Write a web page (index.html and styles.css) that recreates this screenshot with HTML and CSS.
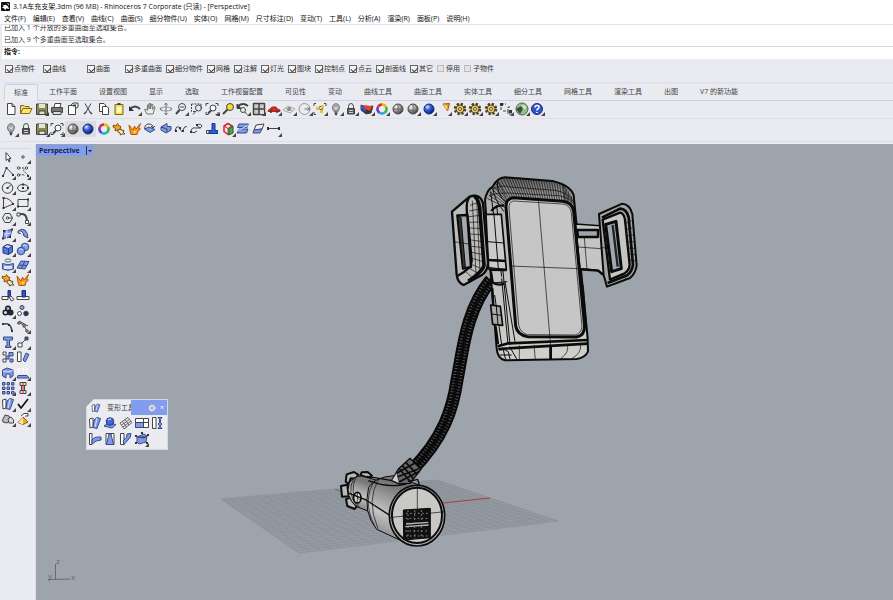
FILE: index.html
```
<!DOCTYPE html>
<html lang="zh-CN">
<head>
    <meta charset="UTF-8">
    <title>3.1A车充支架.3dm (96 MB) - Rhinoceros 7 Corporate</title>
    <link rel="stylesheet" href="styles.css">
</head>
<body>
    <header class="titlebar">
        <svg class="logo" viewBox="0 0 10 10"><rect width="10" height="10" rx="1" fill="#111"/><path d="M1 2L3 4L5 3L8 5L9 8L6 7L5 9L3 7L1 6L3 5Z" fill="#fff"/><path d="M6 1L9 2V4Z" fill="#ccc"/></svg>
        <span>3.1A车充支架.3dm (96 MB) - Rhinoceros 7 Corporate (只读) - [Perspective]</span>
    </header>
    <nav class="menu">
        <button>文件(F)</button>
        <button>编辑(E)</button>
        <button>查看(V)</button>
        <button>曲线(C)</button>
        <button>曲面(S)</button>
        <button>细分物件(U)</button>
        <button>实体(O)</button>
        <button>网格(M)</button>
        <button>尺寸标注(D)</button>
        <button>变动(T)</button>
        <button>工具(L)</button>
        <button>分析(A)</button>
        <button>渲染(R)</button>
        <button>面板(P)</button>
        <button>说明(H)</button>
    </nav>
    <div class="history">
        <p>已加入 1 个开放的多重曲面至选取集合。</p>
        <p>已加入 9 个多重曲面至选取集合。</p>
    </div>
    <div class="prompt">
        <label for="cmd">指令:</label>
        <input type="text" id="cmd" name="cmd">
    </div>
    <div class="filters">
        <label class="w1"><input type="checkbox" checked>点物件</label>
        <label class="w2"><input type="checkbox" checked>曲线</label>
        <label class="w1"><input type="checkbox" checked>曲面</label>
        <label><input type="checkbox" checked>多重曲面</label>
        <label><input type="checkbox" checked>细分物件</label>
        <label><input type="checkbox" checked>网格</label>
        <label><input type="checkbox" checked>注解</label>
        <label><input type="checkbox" checked>灯光</label>
        <label><input type="checkbox" checked>图块</label>
        <label><input type="checkbox" checked>控制点</label>
        <label><input type="checkbox" checked>点云</label>
        <label><input type="checkbox" checked>剖面线</label>
        <label><input type="checkbox" checked>其它</label>
        <label><input class="off" type="checkbox">停用</label>
        <label><input class="off" type="checkbox">子物件</label>
    </div>
    <div class="tabs">
        <button class="on">标准</button>
        <button>工作平面</button>
        <button>设置视图</button>
        <button>显示</button>
        <button>选取</button>
        <button>工作视窗配置</button>
        <button>可见性</button>
        <button>变动</button>
        <button>曲线工具</button>
        <button>曲面工具</button>
        <button>实体工具</button>
        <button>细分工具</button>
        <button>网格工具</button>
        <button>渲染工具</button>
        <button>出图</button>
        <button>V7 的新功能</button>
    </div>
    <div class="bar"><div class="tools std" data-icons="new open save. print props cut copy paste undo. pan rotate zoom. zoomwin zoomext. zoomsel undoview. views. car. cplane. circlec. points. bulb. lock. layers. wheel. sphere shaded. blue. cone. gear. gear. gear. dim. globe. help."></div></div>
    <div class="bar last"><div class="tools sub" data-icons="bulb. lock save. zoomext. shaded* blue* wheel join explode srfloop srfback wave loop tpiece boxred. planes offset line."></div></div>

    <main>
        <aside><div class="tools side" data-icons="arrow point. polyline. ctrl. circle. ellipse. arc. rect. polygon. fillet. patch. sheet. box. union. cylinder. plane. join explode trim split group. ungroup curve curvepts. text. move. array mirror boxedit. lift. grid. flow. bend. check. cage. pyramid."></div></aside>
        <section class="viewport">
            <svg class="scene" viewBox="36 144 857 456" preserveAspectRatio="xMinYMin slice">
                <defs>
                    <linearGradient id="metal" x1="0" y1="0" x2="-.3" y2="1">
                        <stop offset="0" stop-color="#777"/><stop offset=".4" stop-color="#c4c4c4"/><stop offset="1" stop-color="#555"/>
                    </linearGradient>
                    <linearGradient id="shell" x1="0" y1="0" x2="0" y2="1">
                        <stop offset="0" stop-color="#606060"/><stop offset=".14" stop-color="#b4b4b4"/><stop offset="1" stop-color="#d0d0cd"/>
                    </linearGradient>
                </defs>
                <path d="M221 499L299 553L558 521L437 480Z" fill="#969ca4"/>
                <g id="floor" stroke="#858b93" stroke-width=".5"></g>
                <path d="M335 489L342 492" stroke="#2f9b3c"/>
                <path d="M443 503L490 498" stroke="#b3393d"/>

                <!-- hose -->
                <g fill="none">
                    <path d="M491 280C466 310 463 350 457 380C453 408 444 438 411 471" stroke="#080808" stroke-width="13"/>
                    <path d="M490 282C466 310 463 350 457 380C453 408 444 438 412 470" stroke="#555" stroke-width="9" stroke-dasharray="1 2"/>
                    <path d="M490 282C466 310 463 350 457 380C453 408 444 438 412 470" stroke="#090909" stroke-width="4" stroke-dasharray="2 1"/>
                </g>

                <!-- charger -->
                <g transform="translate(320 440) scale(.3333)" stroke="#0b0b0b" stroke-width="3" stroke-linejoin="round">
                    <g fill="#b9b9b7" stroke-width="6">
                        <path d="M77 125L80 103L102 96L114 104L109 116L92 115L86 132Z"/>
                        <path d="M63 138L82 134L86 169L66 170Z"/>
                        <path d="M78 178L92 172L110 199L104 207L82 198Z"/>
                        <path d="M121 105L125 97L143 96L156 107L145 114Z"/>
                    </g>
                    <path d="M88 128Q102 107 125 108L175 122L149 215L108 199Q75 170 88 128Z" fill="url(#metal)"/>
                    <path d="M102 115Q78 155 112 200M108 112Q86 155 118 202" fill="none" stroke-width="2"/>
                    <ellipse cx="112" cy="173" rx="11" ry="16" fill="#ddd" stroke-width="5"/>
                    <path d="M106 164L118 180M112 158V188" stroke-width="2"/>
                    <path d="M146 142Q164 111 222 107L302 137L278 318L170 268Q128 218 146 142Z" fill="url(#metal)"/>
                    <path d="M165 121Q125 180 164 258M177 116Q137 180 174 266" fill="none" stroke-width="2"/>
                    <path d="M140 109L235 125M84 159L138 180L220 233M145 122Q205 145 258 132" fill="none" stroke-width="4"/>
                    <ellipse cx="291" cy="227" rx="83" ry="91" fill="#b5b5b2" stroke-width="5"/>
                    <ellipse cx="291" cy="226" rx="75" ry="83" fill="#c9c8c5" stroke-width="6"/>
                    <path d="M292 137V220M208 233L374 215" stroke-width="2"/>
                    <path d="M250 210L331 205V293L251 300Z" fill="#111"/>
                    <path d="M258 252L325 247M256 260L326 255" stroke="#b8b8b5" stroke-width="4"/>
                    <path d="M258 220H325M257 235H325M256 273H325M258 288H325M264 211V296M284 211V296M304 211V296" fill="none" stroke="#888" stroke-dasharray="5 7"/>
                    <path d="M215 122L235 87L270 55L303 88L270 130L238 132Z" fill="#666" stroke-width="4"/>
                    <path d="M238 86L270 124M247 77L281 117M258 68L292 104M231 99L285 69M232 111L297 86M237 126L299 94" stroke-width="5"/>
                    <path d="M216 120L230 97L238 129" fill="#ccc" stroke-width="2"/>
                    <path d="M265 125L293 118L299 137" fill="none" stroke-width="4"/>
                </g>

                <!-- phone holder -->
                <g transform="translate(430 165) scale(.3333)" stroke="#0b0b0b" stroke-width="3" stroke-linejoin="round">
                    <path d="M165 105Q170 75 188 65Q202 38 225 37L367 48Q420 60 431 90L438 160L473 520L474 560Q465 579 440 582L225 586Q202 580 200 550L187 390Z" fill="url(#shell)" stroke-width="6"/>
                    <path id="ribs" fill="none" stroke-width="2"/>
                    <path d="M188 65Q190 100 222 140M202 48Q200 90 228 112M182 80L215 335M200 120L240 540M178 355L232 350M194 390L215 540M215 340L234 538M225 350L255 530" fill="none" stroke-width="3"/>
                    <path d="M184 138Q196 120 222 121" fill="none" stroke-width="7"/>
                    <path d="M168 148L214 148L229 314L176 312Z" fill="#cbcbc9" stroke-width="5"/>
                    <path d="M192 150L205 310M172 230L222 234M172 283L226 287M174 307L228 314" fill="none"/>
                    <path d="M174 285L228 288M178 314L230 315" stroke-width="8"/>
                    <path d="M182 420L211 424L218 481L188 478Z" fill="#aaa" stroke-width="5"/>
                    <path d="M185 447L213 451M199 424L204 478" fill="none"/>
                    <path d="M183 320L188 352Q200 363 222 357M187 370L190 420M197 484L204 537" fill="none" stroke-width="7"/>

                    <path d="M436 177L522 183L532 324L514 326L503 316L450 311Z" fill="#c5c5c3" stroke-width="5"/>
                    <path d="M442 195H504V216H444Z" fill="#9fa6ad" stroke-width="7"/>
                    <path d="M443 246L527 252M463 218L471 312" fill="none" stroke-width="2"/>
                    <path d="M450 313L505 317L518 328L535 326" fill="none" stroke-width="7"/>

                    <path d="M66 140L119 95Q150 84 159 116L174 293Q173 318 157 329L101 360Q83 354 80 329Z" fill="#bcbcba" stroke-width="7"/>
                    <path d="M119 96Q104 112 114 165L125 286Q127 310 82 333" fill="none" stroke-width="7"/>
                    <path d="M132 94Q144 98 149 127L162 300Q160 318 115 349" fill="none" stroke-width="11"/>
                    <path d="M82 151L112 150L123 306L99 311Z" fill="#a2a8ae" stroke-width="7"/>
                    <path d="M83 152L93 157L106 305L99 311Z" fill="#333"/>
                    <path d="M120 121L146 112M118 138L149 132M117 155L151 151M118 172L153 171M120 189L155 191M122 207L157 210M123 225L158 230M125 244L160 248M126 262L160 269M126 280L162 291M122 297L157 312M115 309L145 325M105 318L127 338M72 230L122 238M127 107L138 325M140 105L150 320" fill="none" stroke-width="2"/>

                    <path d="M507 147L577 116Q600 118 607 147L620 301Q617 325 600 339L531 365L521 330Z" fill="#a6a6a4" stroke-width="6"/>
                    <path d="M518 164L570 143Q582 145 585 164L599 299Q598 316 584 325L540 344Z" fill="#c5c5c3" stroke-width="7"/>
                    <path d="M527 178L558 169L574 311L545 320Z" fill="#a0a7ae" stroke-width="9"/>
                    <path d="M548 180L563 305" stroke="#222" stroke-width="7"/>
                    <path d="M516 158L570 131Q590 132 596 157L609 299Q607 319 592 331L533 354" fill="none" stroke-width="8"/>
                    <path d="M586 176L605 167M588 194L608 188M590 213L610 210M592 231L612 230M594 249L614 250M596 267L616 269M598 285L618 288M575 325L590 344M511 247L534 250" stroke-width="2"/>

                    <path d="M250 98L398 109Q427 113 431 139L464 485Q463 512 440 516L292 515Q262 509 257 483L228 126Q228 100 250 98Z" fill="#c6c6c7" stroke-width="9"/>
                    <path d="M250 108L397 117Q421 119 424 144L456 486Q453 506 435 510L292 509Q270 502 266 480L237 130Q236 111 250 108Z" fill="none" stroke-width="2"/>
                    <path d="M325 100L365 580M237 303L446 311" stroke-width="2"/>
                    <path d="M203 544L235 535L474 525M205 552L474 536" fill="none" stroke-width="8"/>
                    <path d="M268 541V583M312 540L316 583M360 538V582M411 536Q420 562 392 581M451 535Q457 565 425 581M460 360L473 520" fill="none" stroke-width="2"/>
                    <path d="M362 540V582" stroke-width="8"/>
                    <path d="M207 556Q223 549 235 560L240 582M218 548L227 583M239 545L260 582M209 570H245" fill="none" stroke-width="3"/>
                </g>

                <g class="axes">
                    <path d="M55.5 564V580M48 579.500L70 579"/>
                    <text x="56" y="564">z</text><text x="48" y="579">y</text><text x="71" y="580">x</text>
                </g>
            </svg>
            <button class="vname"><span>Perspective</span><i></i></button>
            <div class="palette">
                <div class="phead">
                    <svg class="ic small" viewBox="0 0 14 14"><use href="#bend"/></svg>
                    <span>变形工具</span>
                    <div class="pbtn">
                        <button aria-label="选项"><svg viewBox="0 0 8 8"><circle cx="4" cy="4" r="2.500" fill="none" stroke="#eee9d0" stroke-width="2" stroke-dasharray="1.300 .7"/><circle cx="4" cy="4" r="2" fill="none" stroke="#eee9d0"/></svg></button>
                        <button aria-label="关闭">×</button>
                    </div>
                </div>
                <div class="tools deform" data-icons="bend ball mesh stretch twist taper cone2 flow2 cage2."></div>
            </div>
        </section>
    </main>
    <script src="main.js"></script>
</body>
</html>
```
FILE: styles.css
```
*{
    box-sizing: border-box;
}
body{
    margin: 0;
    height: 100vh;
    display: flex;
    flex-direction: column;
    overflow: hidden;
    background: #e9ebf0;
    color: #333;
    font-family: "Open Sans", "Noto Sans CJK SC", sans-serif;
    font-size: 7px;
    line-height: 12px;
}
button{
    border: 0;
    margin: 0;
    padding: 0;
    background: none;
    color: inherit;
    font: inherit;
    white-space: nowrap;
}
.titlebar{
    display: flex;
    align-items: center;
    gap: 3px;
    height: 13px;
    padding-left: 1px;
    background: #fff;
    color: #111;
    white-space: nowrap;
}
.logo{
    width: 9px;
    height: 9px;
}
.menu{
    display: flex;
    gap: 7px;
    height: 11px;
    padding-left: 4px;
    background: #fff;
    line-height: 10px;
    color: #111;
}
.history{
    display: flex;
    flex-direction: column;
    justify-content: flex-end;
    height: 23px;
    margin-left: 2px;
    padding-left: 2px;
    overflow: hidden;
    background: #fff;
    border-top: 1px solid #dfe2e8;
    border-bottom: 1px solid #d3dbe5;
}
.history p{
    margin: 0;
    flex: none;
}
.prompt{
    display: flex;
    height: 12px;
    margin-left: 2px;
    padding-left: 2px;
    background: #fff;
    line-height: 10px;
    font-weight: bold;
    color: #111;
}
.prompt input{
    flex: 1;
    border: 0;
    padding: 0 2px;
    outline: 0;
    background: none;
    font: inherit;
}
.filters{
    display: flex;
    align-items: center;
    gap: 4px;
    height: 24px;
    margin: 0 0 0 2px;
    padding-left: 3px;
    padding-bottom: 4px;
    border-bottom: 1px solid #dfe2ec;
}
.filters label{
    display: flex;
    align-items: center;
    gap: 1px;
    white-space: nowrap;
}
.filters .w1{
    width: 34px;
}
.filters .w2{
    width: 40px;
}
.filters input{
    appearance: none;
    width: 8px;
    height: 8px;
    margin: 0;
    border: 1px solid #666;
    background: #f5f5f5;
}
.filters input:checked::before{
    content: "";
    display: block;
    width: 5px;
    height: 3px;
    margin: 1px 0 0 1px;
    border: solid #444;
    border-width: 0 0 1px 1px;
    transform: rotate(-45deg);
}
.filters input.off{
    width: 7px;
    height: 7px;
    margin-right: 1px;
    border-color: #bbb;
    background: #e4e4e6;
}
.tabs{
    display: flex;
    height: 18px;
    margin-left: 4px;
    border-top: 1px solid #e2e4ec;
    border-bottom: 1px solid #ccd0e0;
}
.tabs button{
    padding: 0 11px;
    color: #444;
}
.tabs .on{
    margin-bottom: -1px;
    padding: 0 9px;
    background: #eceef3;
    border-right: 1px solid #ccd3e0;
    border-top: 1px solid #ccd3e0;
    border-left: 1px solid #ccd3e0;
    border-radius: 4px 0 0 0;
}
.bar{
    height: 18px;
    margin-left: 2px;
    padding-left: 1px;
    border-bottom: 1px solid #dcdfe6;
}
.last{
    height: 23px;
    padding-top: 2px;
    margin-bottom: 2px;
}
.tools{
    display: grid;
}
.tools button{
    position: relative;
    display: flex;
    align-items: center;
    justify-content: center;
    min-width: 0;
}
.tools .more::after{
    content: "";
    position: absolute;
    right: 0;
    bottom: 0;
    border: solid transparent;
    border-width: 2px;
    border-right-color: #444;
    border-bottom-color: #444;
}
.tools .lit{
    background: #dadce0;
}
.ic{
    width: 14px;
    height: 14px;
    flex: none;
    fill: none;
    stroke: #444;
    stroke-linejoin: round;
}
.small{
    width: 10px;
    height: 10px;
}
.defs{
    position: absolute;
    width: 0;
    height: 0;
}
.std{
    width: 542px;
    height: 15px;
    grid-template-columns: repeat(35, 1fr);
}
.sub{
    width: 279px;
    height: 16px;
    grid-template-columns: repeat(18, 1fr);
}
main{
    flex: 1;
    display: flex;
    min-height: 0;
}
aside{
    width: 36px;
    flex: none;
    padding: 4px 4px 0 0;
    border-right: 1px solid #d9dce2;
}
.side{
    height: 279px;
    grid-template-columns: 1fr 1fr;
    grid-auto-rows: 1fr;
    border-top: 1px solid #d0d8e4;
}
.viewport{
    position: relative;
    flex: 1;
    min-width: 0;
    background: #9da4ab;
}
.scene{
    display: block;
    width: 100%;
    height: 100%;
}
.axes path{
    fill: none;
    stroke: #666b70;
}
.axes text{
    fill: #666b70;
    font-size: 8px;
}
.vname{
    position: absolute;
    left: 0;
    top: 1px;
    display: flex;
    align-items: center;
    height: 11px;
    padding: 0 1px 0 3px;
    background: #829cee;
    color: #1a2140;
    font-size: 7px;
    font-weight: bold;
    line-height: 11px;
}
.vname i{
    display: flex;
    align-items: center;
    height: 9px;
    margin-left: 6px;
    padding-left: 1px;
    border-left: 1px solid #333;
}
.vname i::after{
    content: "";
    border: 2px solid transparent;
    border-top-color: #222;
    margin-top: 2px;
}
.palette{
    position: absolute;
    left: 50px;
    top: 255px;
    width: 82px;
    height: 51px;
    background: #eaecf1;
    border: 1px solid #d5d9e2;
    clip-path: polygon(8px 0, 100% 0, 100% 100%, 0 100%, 0 8px);
}
.phead{
    display: flex;
    align-items: center;
    height: 15px;
    padding-left: 4px;
    gap: 6px;
}
.phead span{
    flex: 1;
    min-width: 0;
    white-space: nowrap;
}
.pbtn{
    position: relative;
    flex: none;
    display: flex;
    align-items: center;
    justify-content: flex-end;
    gap: 4px;
    width: 36px;
    height: 15px;
    margin-left: -6px;
    padding-right: 3px;
    background: #829cee;
    color: #fff;
}
.pbtn button{
    display: flex;
}
.pbtn svg{
    width: 8px;
    height: 8px;
}
.deform{
    width: 78px;
    height: 32px;
    grid-template-columns: repeat(5, 1fr);
    grid-auto-rows: 1fr;
}
```
FILE: main.js
```
// toolbar icons, drawn on a 14 x 14 grid
var blue = 'fill="#7d9bea" stroke="#3a4a86"';
var dark = 'fill="#333" stroke="none"';
var icons = {
    "new": '<path d="M3.500 1.500H8L11 4.500V12.500H3.500Z" fill="#fff"/><path d="M8 1.500V4.500H11"/>',
    open: '<path d="M1.500 11.500V3.500H5L6 4.500H10V6.500" fill="#f5d76a" stroke="#8a6a10"/><path d="M1.500 11.500L4 6.500H13L10.500 11.500Z" fill="#ffe27a" stroke="#8a6a10"/>',
    save: '<path d="M1.500 2H12.500V12.500H1.500Z" fill="#8b8a4a"/><path d="M4 2H10V6H4Z" fill="#e6e6d8" stroke="none"/><path d="M4 9H10V12.500H4Z" fill="#ddd"/>',
    print: '<path d="M4 5L5 1.500H11L10 5" fill="#fff"/><path d="M1.500 5.500H12.500V10.500H1.500Z" fill="#777"/><path d="M3 9.500H11V12.500H3Z" fill="#ddd"/>',
    props: '<path d="M2.500 3.500H9.500V12.500H2.500Z" fill="#fff"/><path d="M5 3L7 1H12V5L9 7"/><path d="M7 3.500H10" stroke-width="2"/>',
    cut: '<path d="M4 1.500L9.500 11M10 1.500L4.500 11"/><path d="M3 12L5 10M9 10L11 12" stroke-width="1.500"/>',
    copy: '<path d="M2.500 1.500H7L8.500 3V9.500H2.500Z" fill="#fff"/><path d="M5.500 4.500H10L11.500 6V12.500H5.500Z" fill="#fff"/>',
    paste: '<path d="M3 2.500H11V12.500H3Z" fill="#f5df4d" stroke="#7d6d14"/><path d="M5 5H9.500V10.500H5Z" fill="#fffbd0" stroke="none"/><path d="M5.500 2H8.500" stroke-width="2"/>',
    undo: '<path d="M2 7Q7 2 12 7" stroke-width="2"/><path d="M1 4V9H6Z" fill="#333" stroke="none"/>',
    pan: '<path d="M4 12L1.500 7.500L3 7L4.500 8.500V3L6 2.500V7V1.500L7.500 1.500V7L8.500 2L10 2.500L9.500 7.500L11.500 4.500L12 5.500L10 12Z" fill="#eee" stroke="#777"/>',
    rotate: '<ellipse cx="7" cy="7" rx="5.500" ry="2" stroke="#999"/><path d="M7 1V13M5.500 3L7 1L8.500 3M5.500 11L7 13L8.500 11M2 5.500L1 7L3 8.500M12 5.500L13 7L11 8.500" stroke="#777"/>',
    zoom: '<circle cx="8" cy="5" r="3.500" fill="#f4f4f4"/><path d="M5.500 8L2 12" stroke-width="2"/><path d="M6 5H10"/>',
    zoomwin: '<path d="M1.500 2H11V7M1.500 2V9.500H5" stroke-dasharray="2 1"/><circle cx="8.500" cy="6" r="3"/><path d="M6.500 8.500L3 12.500"/>',
    zoomext: '<path d="M1 4V1.500H3.500M10.500 1.500H13V4M13 10V12.500H10.500M3.500 12.500H1V10"/><circle cx="8" cy="6" r="3" fill="#f7f7f7"/><path d="M6 8.500L3 11.500" stroke-width="2"/>',
    zoomsel: '<circle cx="9" cy="5" r="3.500" fill="#f3dc3c"/><path d="M6.500 7.500L2 12" stroke-width="2"/>',
    undoview: '<path d="M2 4Q7 0 12 4" stroke-width="2"/><path d="M1 2V6.500H5Z" fill="#333"/><circle cx="7" cy="8" r="2.500" fill="#eee"/><path d="M9 10L11 12.500"/>',
    views: '<path d="M1.500 1.500H12.500V12.500H1.500ZM7 1.500V12.500M1.500 7H12.500" fill="#ccc" stroke-width="1.500"/><path d="M8 8H12V12H8Z" fill="#ddd" stroke="none"/>',
    car: '<path d="M1 8.500L3 7L5 5H9L10.500 7L13 8V9.500H1Z" fill="#d22a22" stroke="#c0201a"/><circle cx="4" cy="9.500" r="1" fill="#333"/><circle cx="10" cy="9.500" r="1" fill="#333"/>',
    cplane: '<path d="M1 8L6 4L13 7L8 11ZM3.500 6L10.500 9M5 9.500L10 5.500" stroke="#aaa"/><circle cx="7" cy="7" r="1.500" fill="#c77" stroke="#888"/>',
    circlec: '<circle cx="6.500" cy="7" r="5.500" stroke="#999"/><path d="M6.500 7H12M9.500 5.500L12 7L9.500 8.500" stroke="#777"/>',
    points: '<path d="M1 4V1.500H3M11 1.500H13V4M3 12.500H1V10"/><path d="M4 6L10 3.500L9 8Z" stroke="#555"/><path d="M3 5H6V8H3ZM8 3H11V6H8ZM7 8H10V11H7Z" fill="#f0c420" stroke="none"/>',
    bulb: '<path d="M5 9.500Q3 7 3.500 4.500Q5 1.500 7 1.500Q9.500 2 10.500 4.500Q10.500 7 9 9.500Z" fill="#aaa" stroke="#777"/><path d="M5.500 11H8.500M6 12.500H8" stroke-width="1.500"/><path d="M5.500 5L7 7L8.500 5" stroke="#eee"/>',
    lock: '<path d="M4.500 7V4.500Q4.500 1.500 7 1.500Q9.500 1.500 9.500 4.500V7"/><path d="M3.500 6.500H10.500V12H3.500Z" fill="#555"/><path d="M5 8.500H9M5 10.500H9" stroke="#ccc"/>',
    layers: '<path d="M1 3L6 5L13 4L11 11L6 12L1 8Z" fill="#333"/><path d="M1 3L6 5V10L1 7Z" fill="#3555cc" stroke="none"/><path d="M3 3L12 4L10 9L5 7Z" fill="#e8412a" stroke="none"/>',
    wheel: '<path d="M7 2.500A4.500 4.500 0 0 1 11 5" stroke="#f4b400" stroke-width="2.500"/><path d="M11 5A4.500 4.500 0 0 1 9.500 10.700" stroke="#39b54a" stroke-width="2.500"/><path d="M9.500 10.700A4.500 4.500 0 0 1 4.500 10.700" stroke="#19a8e0" stroke-width="2.500"/><path d="M4.500 10.700A4.500 4.500 0 0 1 3 5" stroke="#6a35c8" stroke-width="2.500"/><path d="M3 5A4.500 4.500 0 0 1 7 2.500" stroke="#e02e35" stroke-width="2.500"/>',
    sphere: '<circle cx="7" cy="7" r="5" fill="url(#gGrey)"/><path d="M2 7H12M7 2V12" stroke="#666"/>',
    shaded: '<circle cx="7" cy="7" r="5" fill="url(#gGrey)"/><path d="M2.500 8Q7 10 11.500 8M7 2V12" stroke="#666"/>',
    blue: '<circle cx="7" cy="7" r="5" fill="url(#gBlue)" stroke="#102c80"/>',
    cone: '<path d="M6 2L12.500 1.500L10.500 9Z" fill="#ef9a22" stroke="#9a5a10"/><path d="M6 2L10 4L10.500 9" fill="#ffd67a" stroke="none"/>',
    gear: '<circle cx="7" cy="7" r="5" stroke="#4d431f" stroke-width="2.500" stroke-dasharray="2.300 1.627"/><circle cx="7" cy="7" r="4" fill="#f0c96a" stroke="#54461a"/><circle cx="7" cy="7" r="1.500" fill="#fff" stroke="#54461a"/>',
    dim: '<path d="M2 1V8M2 2H7M4 9H9V5H12M9 9V12H13" stroke-dasharray="3 1"/><path d="M1 1H4V4H1ZM10 8H13V11H10Z" fill="#333" stroke="none"/>',
    globe: '<circle cx="7" cy="7" r="6" fill="#8fc283" stroke="#4d6650"/><path d="M1 7L6 4L8 7L5 12Z" fill="#3e4f42" stroke="none"/><path d="M6 3L11 4L10 8Z" fill="#d9e8cf" stroke="none"/>',
    help: '<circle cx="7" cy="7" r="5.500" fill="#2f55c8" stroke="#1b2d77"/><path d="M5 5.500Q5 3.500 7 3.500Q9 3.500 9 5.200Q9 6.500 7 7.500V8.500M7 10V11" stroke="#fff" stroke-width="1.500"/>',
    join: '<path d="M1.500 3L4 4L5.500 1.500L7 4L9 4.500L8 6.500L10 8L7 9L5 8L3 9L3.500 6.500L1 5Z" fill="#f5a623" stroke="#8e5200"/><path d="M6 8L8 7L9.500 8L12 8.500L11 10L13 12L10 12L8.500 13L8 11L6 10Z" fill="#f2e2c0" stroke="#6b4d1c"/>',
    explode: '<path d="M1 3L5 8L6.500 4L8 7L12.500 1.500L10.500 6.500L12.500 7L10 9L9 12.500H3L2 9Z" fill="#f59a1e" stroke="#b85a08"/><path d="M5 9L7 11.500L9 9" fill="#ffdc70" stroke="none"/>',
    srfloop: '<path d="M1.500 7L6 5L12 7.500L7 10.500Z" ' + blue + '/><path d="M2 7Q1 3 5 2Q10 2 10 5M8 4L10 6L12 4"/>',
    srfback: '<path d="M2 5L8 1.500V4.500H12V8L7 11L2 8Z" ' + blue + '/><path d="M2 5L8 7V10"/>',
    wave: '<path d="M1 9Q3 2 5.500 6Q8 12 9.500 7Q11 3 13 5"/><path d="M1 8H3V10H1ZM5 5H7V7H5ZM8 8H10V10H8Z" ' + dark + '/>',
    loop: '<path d="M1 10Q1 5 6 6Q11 7 12 4Q11 1 7 3Q8 6 11 6M1 10Q4 12 7 9"/><path d="M0 9H2V11H0ZM6 2H8V4H6Z" ' + dark + '/>',
    tpiece: '<path d="M1.500 8.500H12.500V11.500H1.500Z" fill="#eee"/><path d="M7 1.500H10V8.500H12.500V11.500H4V8.500H7Z" fill="#2e60d5" stroke="#17377f"/>',
    boxred: '<path d="M3 4L7 1.500L11 4V9.500L7 12.500L3 9.500Z" stroke="#d22" stroke-width="1.500"/><path d="M3 4L7 6.500L11 4M7 6.500V12" stroke="#d22"/><path d="M8 6L12 4V11L8 13Z" fill="#49a84c" stroke="#245d26"/>',
    planes: '<path d="M3 2H12.500L11 5.500H1.500ZM3 7H12L10.500 11H1Z" ' + blue + '/><path d="M1 9L13 3" stroke="#cfd9ff"/>',
    offset: '<path d="M4 3L12 2L10 7L2 8Z" fill="#eee"/><path d="M2 8L10 7L8 11L1 11Z" ' + blue + '/>',
    line: '<path d="M1 6.500H12"/><path d="M0 5H2V8H0ZM11 5H13V8H11Z" ' + dark + '/>',
    arrow: '<path d="M5 2.500V10.500L7 9L8 12L9 11.500L8 8.500H10Z" fill="#fff"/>',
    point: '<circle cx="7" cy="7" r="1.200" fill="#fff"/>',
    polyline: '<path d="M2 11L5.500 3L12 9.500"/><path d="M1 10H3V12H1ZM4.500 2H6.500V4H4.500ZM11 9H13V11H11Z" ' + dark + '/>',
    ctrl: '<path d="M3 3H10M10.500 3Q5 5 10 8Q12 9 12 11M3 10Q8 9 9 11" stroke-dasharray="2 1"/><circle cx="2.500" cy="3" r="1.200" fill="#fff"/><circle cx="10.500" cy="3" r="1.200" fill="#fff"/><circle cx="2.500" cy="10" r="1.200" fill="#fff"/><path d="M11 10H13V12H11Z" ' + dark + '/>',
    circle: '<circle cx="6.500" cy="7" r="5.300"/><path d="M6.500 7L10.500 3.500"/><path d="M5.500 6H7.500V8H5.500Z" ' + dark + '/>',
    ellipse: '<ellipse cx="7" cy="7" rx="5.500" ry="3.500"/><path d="M6 6H8V8H6ZM6 2.500H8V4.500H6ZM11 6H13V8H11Z" ' + dark + '/>',
    arc: '<path d="M2.500 12V2Q9 2 12 8L2.500 12"/><path d="M1.500 1H3.500V3H1.500ZM11 7H13V9H11ZM1.500 11H3.500V13H1.500Z" ' + dark + '/>',
    rect: '<path d="M2 3.500H12V10.500H2Z"/><path d="M1 9.500H3V11.500H1ZM11 2.500H13V4.500H11Z" ' + dark + '/>',
    polygon: '<path d="M4 2.500H9L11.500 7L9 11.500H4L1.500 7Z"/><circle cx="6.500" cy="7" r="1.200"/><path d="M7 7H11"/>',
    fillet: '<path d="M2 3H6Q11 3 11 11" stroke-width="2"/><path d="M1 2H4V5H1ZM9.500 9.500H12.500V12.500H9.500Z" fill="#fff"/>',
    patch: '<path d="M3 4L11 2.500L9 10L2 11.500Z" ' + blue + '/><path d="M3 7.500L10 6M6 3L5.500 11" stroke="#dce4ff"/><path d="M2 3H4V5H2ZM10 1.500H12V3.500H10ZM8 9H10V11H8ZM1 10.500H3V12.500H1Z" ' + dark + '/>',
    sheet: '<path d="M2 4Q6 1 9 3Q12 6 12 11L8 9Q7 6 2 6Z" ' + blue + '/><path d="M2 4Q7 3 8 9" fill="#fff"/>',
    box: '<path d="M2 5L6 2.500L11.500 4V10L7.500 12.500L2 11Z" fill="#4d76e0" stroke="#2b3a72"/><path d="M2 5L7.500 6.500L11.500 4L6 2.500Z" fill="#cdd9ff" stroke="#2b3a72"/><path d="M7.500 6.500V12.500" stroke="#2b3a72"/>',
    union: '<circle cx="9" cy="5" r="3.800" ' + blue + '/><circle cx="5" cy="9" r="3.800" ' + blue + '/><path d="M3 8Q5 6 7 8M7 4Q9 2 11 4" stroke="#cfdbff"/>',
    cylinder: '<ellipse cx="7" cy="2.500" rx="3" ry="1.500" stroke="#666"/><path d="M1.500 5.500Q7 8 12.500 5.500V11Q7 13.500 1.500 11Z" ' + blue + '/><path d="M3 8H11V11H3Z" fill="#dce5ff" stroke="none"/>',
    plane: '<path d="M5 3L13 3.500L9 11L1 10Z" ' + blue + '/><path d="M3 7L11 7.500M9 3L5 11" stroke="#3a4a86"/>',
    trim: '<path d="M1 7.500H7V10.500H1Z" fill="#fff"/><path d="M7 1.500H9.500V8H7Z" fill="#2f55c8" stroke="#1b2d77"/><path d="M8 8L10 7L13 10.500L10.500 12Z" fill="#eee"/>',
    split: '<path d="M1 7.500H13V10.500H1Z" fill="#fff"/><path d="M6 1.500H9.500V8H6Z" fill="#2f55c8" stroke="#1b2d77"/>',
    group: '<circle cx="7" cy="4.500" r="2.300" fill="#9badf0" stroke="#222" stroke-width="1.500"/><circle cx="4.500" cy="8.500" r="2.300" fill="#ddd" stroke="#222" stroke-width="1.500"/><circle cx="9.500" cy="8.500" r="2.300" fill="#1d2770" stroke="#222" stroke-width="1.500"/>',
    ungroup: '<circle cx="6" cy="3.500" r="2" fill="#8ea0ed"/><circle cx="3.500" cy="9.500" r="2" fill="#fff"/><circle cx="10" cy="9.500" r="2.300" fill="#20297c"/>',
    curve: '<path d="M2 4Q10 2 11 11" stroke-width="1.500"/><path d="M1 3H3V5H1ZM10 10H12V12H10ZM7 4H9V6H7Z" ' + dark + '/>',
    curvepts: '<path d="M1 3Q8 2 11 12M3 1L12 6"/><path d="M2 2H4V4H2ZM7 5H9V7H7ZM10 10H12V12H10Z" fill="#ddd"/>',
    text: '<path d="M2.500 2H11.500V5H8.500V11H10V12.500H4.500V11H6V5H2.500Z" ' + blue + '/>',
    move: '<path d="M2 8H6V12H2Z" fill="#fff"/><path d="M9 2H12V5H9Z" fill="#3154c6"/><path d="M6 8L9 5"/>',
    array: '<path d="M2 2H5V5H2ZM2 9H5V12H2Z" fill="#fff"/><path d="M8 2.500H12V6H8ZM9 9H12V12H9ZM5 6H8V9H5Z" ' + blue + '/>',
    mirror: '<path d="M1.500 2H5V11.500H1.500Z" fill="#fff"/><path d="M7 10L10 3L13 4.500L9 12Z" ' + blue + '/>',
    boxedit: '<path d="M1.500 4L6 2L12 4V10L9 12V8H5V12L1.500 10Z" ' + blue + '/><path d="M2 5L7 6L12 4.500" stroke="#dce5ff"/>',
    lift: '<path d="M2 9.500H11L13 12H1Z" ' + blue + '/><path d="M3 8V2M7 8V2M11 8V2M1.500 3.500L3 2L4.500 3.500M5.500 3.500L7 2L8.500 3.500M9.500 3.500L11 2L12.500 3.500" stroke="#fff"/>',
    grid: '<path d="M1.500 1.500H4V4H1.500ZM6 1.500H8.500V4H6ZM10.500 1.500H13V4H10.500ZM1.500 6H4V8.500H1.500ZM6 6H8.500V8.500H6ZM10.500 6H13V8.500H10.500ZM1.500 10.500H4V13H1.500ZM6 10.500H8.500V13H6ZM10.500 10.500H13V13H10.500Z" ' + blue + '/>',
    flow: '<path d="M4 1.500H10V4.500H4ZM4 9.500H10V12.500H4ZM5.500 4.500H8.500V9.500H5.500Z" fill="#ddd"/><path d="M7 1V13" stroke="#d22"/>',
    bend: '<path d="M1.500 3L5 2V11L2 12Z" fill="#fff"/><path d="M6 4L9 1.500L12.500 2.500L9 12.500L5 11.500Z" ' + blue + '/><path d="M9 2L7 11" stroke="#dbe4ff"/>',
    check: '<path d="M2 7L5 11L12 2" stroke="#111" stroke-width="1.700"/>',
    cage: '<path d="M1.500 8L4 3L8 4L9.500 8L6 11L2 10Z" fill="#bbb"/><path d="M7 7L10 5L12.500 8V11H8Z" fill="#ddd"/>',
    pyramid: '<path d="M2 10.500L7 5L12 10L7 12.500Z" fill="#f5a826" stroke="#8a5a10"/><path d="M7 5V12.500L2 10.500Z" fill="#ffe0a0" stroke="none"/><path d="M5 4L8 1.500H12V4H9" fill="#fff"/>',
    ball: '<path d="M1 10L5 7L13 8.500L9 12Z" ' + blue + '/><circle cx="7" cy="5.500" r="3.800" fill="#3e68da" stroke="#2b3a72"/><path d="M5 4Q6 3 8 3" stroke="#fff"/>',
    mesh: '<path d="M1 7L9 1.500L13 6.500L5 13ZM3.500 5.500L7.500 11M6 3.500L10 9M2.500 9L10.500 3.500M4 11L12 5" stroke="#666"/>',
    stretch: '<path d="M.5 2.500H13.500V11.500H.5Z" fill="#fff"/><path d="M.5 6.500H8.500V11.500H.5Z" ' + blue + '/><path d="M.5 6.500H13.500M8.500 2.500V11.500"/>',
    twist: '<path d="M2.500 1.500H6V12.500H2.500Z" fill="#fff"/><path d="M8 1.500H12L9 5L12 8L8 12.500H12L8 8L11 5Z" ' + blue + '/>',
    taper: '<path d="M1.500 1.500H4V12.500H1.500Z" fill="#fff"/><path d="M4 8Q6 4.500 13 5V8Q8 8 4 12Z" ' + blue + '/>',
    cone2: '<path d="M3 1.500H11V12.500H3Z" fill="#fff"/><path d="M6 2H8L10.500 12.500H3.500Z" ' + blue + '/>',
    flow2: '<path d="M1.500 1.500H5V12.500H1.500Z" fill="#fff"/><path d="M8 2L12 1.500Q12 6 8 9L5 12.500L4 9Q9 5 8 2Z" ' + blue + '/>',
    cage2: '<path d="M2 5L9 2L12 4L11 10L4 12L2 10Z" ' + blue + '/><path d="M2 5L9 6L12 4" fill="#3a4a7a"/><path d="M0 3H2V5H0ZM6 0H8V2H6ZM12 2H14V4H12ZM0 10H2V12H0ZM11 10H13V12H11Z" ' + dark + '/>'
};

var defs = '<svg class="defs"><defs>' +
    '<radialGradient id="gGrey" cx=".35" cy=".3" r=".7"><stop offset="0" stop-color="#fff"/><stop offset="1" stop-color="#444"/></radialGradient>' +
    '<radialGradient id="gBlue" cx=".35" cy=".3" r=".7"><stop offset="0" stop-color="#e4ecff"/><stop offset=".4" stop-color="#3c66dd"/><stop offset="1" stop-color="#0b1f70"/></radialGradient>';
for (var k in icons) {
    defs += '<symbol id="' + k + '" viewBox="0 0 14 14">' + icons[k] + '</symbol>';
}
document.body.insertAdjacentHTML("beforeend", defs + "</defs></svg>");

// "." after a name = has a flyout, "*" = highlighted
document.querySelectorAll(".tools").forEach(function (bar) {
    bar.innerHTML = bar.dataset.icons.split(" ").map(function (s) {
        var name = s.replace(/[.*]/, "");
        var cls = s.indexOf(".") > 0 ? "more" : s.indexOf("*") > 0 ? "lit" : "";
        return '<button class="' + cls + '" aria-label="' + name + '"><svg class="ic"><use href="#' + name + '"/></svg></button>';
    }).join("");
});

// ground grid: unit square projected on the four corners
function ground(u, v) {
    var x0 = 221, y0 = 499, x1 = 299, y1 = 553, x2 = 558, y2 = 521, x3 = 437, y3 = 480;
    var dx1 = x1 - x2, dx2 = x3 - x2, sx = x0 - x1 + x2 - x3;
    var dy1 = y1 - y2, dy2 = y3 - y2, sy = y0 - y1 + y2 - y3;
    var d = dx1 * dy2 - dx2 * dy1;
    var g = (sx * dy2 - dx2 * sy) / d, h = (dx1 * sy - sx * dy1) / d;
    var w = g * u + h * v + 1;
    return [
        ((x1 - x0 + g * x1) * u + (x3 - x0 + h * x3) * v + x0) / w,
        ((y1 - y0 + g * y1) * u + (y3 - y0 + h * y3) * v + y0) / w
    ].join(" ");
}
var d = "";
for (var i = 0; i <= 28; i++) {
    var t = i / 28;
    d += "M" + ground(t, 0) + "L" + ground(t, 1) + "M" + ground(0, t) + "L" + ground(1, t);
}
document.getElementById("floor").innerHTML = '<path d="' + d + '"/>';

// mesh lines over the rounded top of the holder
d = "M190 72Q215 58 240 66L375 76Q415 82 432 112M178 92Q205 82 232 84L385 92Q425 98 434 120";
for (i = 0; i < 25; i++) {
    var x = 205 + i * 8;
    d += "M" + x + " " + (i < 3 ? 50 - i * 4 : 38 + Math.pow(i / 25, 3) * 24) + "L" + (235 + i * 7) + " " + (98 + i / 2);
}
for (i = 0; i < 7; i++) {
    d += "M" + (172 + i * 5) + " " + (100 - i * 9) + "L230 " + (130 - i * 5) + "M" + (400 + i * 5) + " " + (58 + i * 7) + "L" + (405 + i * 4) + " " + (108 + i * 4);
}
document.getElementById("ribs").setAttribute("d", d);
```
